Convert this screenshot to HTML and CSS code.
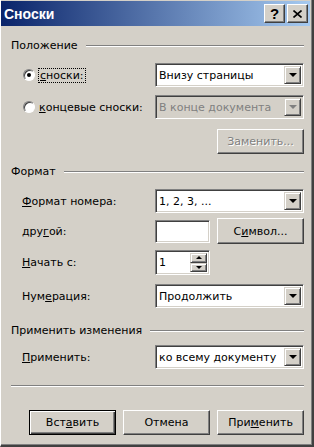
FILE: index.html
```html
<!DOCTYPE html>
<html lang="ru">

<head>
    <meta charset="UTF-8">
    <title>Сноски</title>
    <link rel="stylesheet" href="styles.css">
</head>

<body>

    <div class="window">
        <div class="titlebar">
            <span class="title">Сноски</span>
            <div class="caption-btns">
                <div class="cap-btn help">?</div>
                <div class="cap-btn close">
                    <svg width="9" height="8" viewBox="0 0 9 8">
                        <path d="M0.5 0.5 L8.5 7.5 M8.5 0.5 L0.5 7.5" stroke="#000" stroke-width="1.6" fill="none" />
                    </svg>
                </div>
            </div>
        </div>

        <div class="content">
            <div class="group-head g1"><span>Положение</span><div class="etch"></div></div>

            <div class="row r-radio1">
                <div class="radio-label">
                    <span class="radio checked"></span>
                    <span class="focus"><u>с</u>носки:</span>
                </div>
                <div class="combo">
                    <div class="combo-text">Внизу страницы</div>
                    <div class="drop"><span class="tri"></span></div>
                </div>
            </div>

            <div class="row r-radio2">
                <div class="radio-label">
                    <span class="radio"></span>
                    <span class="lbl"><u>к</u>онцевые сноски:</span>
                </div>
                <div class="combo disabled">
                    <div class="combo-text">В конце документа</div>
                    <div class="drop"><span class="tri"></span></div>
                </div>
            </div>

            <div class="row r-replace">
                <div class="btn disabled-btn">Заменить...</div>
            </div>

            <div class="group-head g2"><span>Формат</span><div class="etch"></div></div>

            <div class="row r-fmt">
                <div class="field-label"><u>Ф</u>ормат номера:</div>
                <div class="combo">
                    <div class="combo-text">1, 2, 3, ...</div>
                    <div class="drop"><span class="tri"></span></div>
                </div>
            </div>

            <div class="row r-other">
                <div class="field-label">дру<u>г</u>ой:</div>
                <div class="pair">
                    <div class="edit small"></div>
                    <div class="btn">С<u>и</u>мвол...</div>
                </div>
            </div>

            <div class="row r-start">
                <div class="field-label"><u>Н</u>ачать с:</div>
                <div class="spin-wrap">
                    <div class="spin">
                        <div class="spin-text">1</div>
                        <div class="spin-btns">
                            <div class="spin-btn"><span class="tri up"></span></div>
                            <div class="spin-btn"><span class="tri"></span></div>
                        </div>
                    </div>
                </div>
            </div>

            <div class="row r-num">
                <div class="field-label">Нум<u>е</u>рация:</div>
                <div class="combo">
                    <div class="combo-text">Продолжить</div>
                    <div class="drop"><span class="tri"></span></div>
                </div>
            </div>

            <div class="group-head g3"><span>Применить изменения</span><div class="etch"></div></div>

            <div class="row r-apply">
                <div class="field-label"><u>П</u>рименить:</div>
                <div class="combo">
                    <div class="combo-text">ко всему документу</div>
                    <div class="drop"><span class="tri"></span></div>
                </div>
            </div>

            <div class="etch sep"></div>

            <div class="buttons">
                <div class="btn default">Вст<u>а</u>вить</div>
                <div class="btn">Отмена</div>
                <div class="btn">При<u>м</u>енить</div>
            </div>
        </div>
    </div>

</body>

</html>
```

FILE: styles.css
```css
html,
body {
    margin: 0;
    height: 100%;
    background: #d4d0c8;
    font-family: "DejaVu Sans", sans-serif;
    font-size: 11px;
    color: #000;
}

u {
    text-decoration: underline;
    text-underline-offset: 1px;
}

.window {
    width: 314px;
    height: 447px;
    box-sizing: border-box;
    background: #d4d0c8;
    border-left: 1px solid #fff;
    border-right: 2px solid #404040;
    border-bottom: 2px solid #404040;
    box-shadow: inset -1px -1px #808080;
    padding-top: 1px;
}

.titlebar {
    height: 25px;
    margin-right: 2px;
    background: linear-gradient(to right, #0a246a, #a6caf0);
    display: flex;
    align-items: center;
    justify-content: space-between;
}

.title {
    font-family: "Liberation Sans", sans-serif;
    font-weight: bold;
    font-size: 14px;
    color: #fff;
    padding-left: 3px;
}

.caption-btns {
    display: flex;
    gap: 2px;
    padding-right: 2px;
}

.cap-btn {
    width: 21px;
    height: 19px;
    box-sizing: border-box;
    background: #d4d0c8;
    border: 1px solid;
    border-color: #fff #404040 #404040 #fff;
    box-shadow: inset -1px -1px #808080;
    display: flex;
    align-items: center;
    justify-content: center;
}

.cap-btn.help {
    font-family: "Liberation Sans", sans-serif;
    font-weight: bold;
    font-size: 15px;
    line-height: 1;
}

.content {
    padding: 13px 8px 0 10px;
}

.group-head {
    display: flex;
    align-items: center;
    height: 13px;
}

.group-head .etch {
    flex: 1;
    margin-left: 8px;
}

.etch {
    height: 0;
    border-top: 1px solid #808080;
    border-bottom: 1px solid #fff;
}

.g2 { margin-top: 11px; }
.g3 { margin-top: 16px; }

.row {
    display: flex;
    align-items: center;
    justify-content: space-between;
}

.r-radio1 { margin-top: 11px; }
.r-radio2 { margin-top: 8px; }
.r-replace { margin-top: 10px; justify-content: flex-end; }
.r-fmt { margin-top: 11px; }
.r-other { margin-top: 5px; }
.r-start { margin-top: 6px; }
.r-num { margin-top: 9px; }
.r-apply { margin-top: 8px; }

.radio-label {
    display: flex;
    align-items: center;
    padding-left: 12px;
}

.radio {
    width: 12px;
    height: 12px;
    box-sizing: border-box;
    border-radius: 50%;
    background: #fff;
    border: 1px solid;
    border-color: #808080 #fff #fff #808080;
    box-shadow: inset 1px 1px #404040;
    margin-right: 4px;
    position: relative;
}

.radio.checked::after {
    content: "";
    position: absolute;
    left: 3px;
    top: 3px;
    width: 4px;
    height: 4px;
    border-radius: 50%;
    background: #000;
}

.focus {
    outline: 1px dotted #000;
    padding: 0 1px;
}

.field-label {
    padding-left: 11px;
}

.combo {
    width: 149px;
    height: 24px;
    flex-shrink: 0;
    box-sizing: border-box;
    background: #fff;
    border: 1px solid;
    border-color: #808080 #fff #fff #808080;
    box-shadow: inset 1px 1px #404040, inset -1px -1px #d4d0c8;
    display: flex;
    align-items: center;
    padding: 2px;
}

.combo-text {
    flex: 1;
    padding-left: 1px;
    white-space: nowrap;
    overflow: hidden;
}

.drop,
.spin-btn {
    width: 17px;
    align-self: stretch;
    box-sizing: border-box;
    background: #d4d0c8;
    border: 1px solid;
    border-color: #d4d0c8 #404040 #404040 #d4d0c8;
    box-shadow: inset 1px 1px #fff, inset -1px -1px #808080;
    display: flex;
    align-items: center;
    justify-content: center;
}

.tri {
    width: 0;
    height: 0;
    border-left: 4px solid transparent;
    border-right: 4px solid transparent;
    border-top: 4px solid #000;
}

.tri.up {
    border-top: none;
    border-bottom: 4px solid #000;
}

.combo.disabled {
    background: #d4d0c8;
    color: #808080;
}

.combo.disabled .tri {
    border-top-color: #808080;
}

.btn {
    width: 87px;
    height: 25px;
    flex-shrink: 0;
    box-sizing: border-box;
    background: #d4d0c8;
    border: 1px solid;
    border-color: #fff #404040 #404040 #fff;
    box-shadow: inset -1px -1px #808080;
    display: flex;
    align-items: center;
    justify-content: center;
}

.disabled-btn {
    color: #808080;
    text-shadow: 1px 1px #fff;
}

.pair {
    display: flex;
    align-items: center;
    justify-content: space-between;
    width: 149px;
    flex-shrink: 0;
}

.pair .btn {
    height: 26px;
}

.edit.small {
    width: 55px;
    height: 23px;
    flex-shrink: 0;
    box-sizing: border-box;
    background: #fff;
    border: 1px solid;
    border-color: #808080 #fff #fff #808080;
    box-shadow: inset 1px 1px #404040, inset -1px -1px #d4d0c8;
}

.spin-wrap {
    width: 149px;
    flex-shrink: 0;
}

.spin {
    width: 55px;
    height: 25px;
    box-sizing: border-box;
    background: #fff;
    border: 1px solid;
    border-color: #808080 #fff #fff #808080;
    box-shadow: inset 1px 1px #404040, inset -1px -1px #d4d0c8;
    padding: 2px;
    display: flex;
}

.spin-text {
    flex: 1;
    display: flex;
    align-items: center;
    padding-left: 1px;
}

.spin-btns {
    width: 17px;
    display: flex;
    flex-direction: column;
}

.spin-btn {
    flex: 1;
    width: 17px;
}

.spin-btn .tri {
    border-left-width: 3px;
    border-right-width: 3px;
    border-top-width: 3px;
}

.spin-btn .tri.up {
    border-bottom-width: 3px;
}

.sep {
    margin-top: 16px;
}

.buttons {
    display: flex;
    justify-content: flex-end;
    gap: 7px;
    margin-top: 23px;
}

.btn.default {
    border: 1px solid #000;
    box-shadow: inset 1px 1px #fff, inset -1px -1px #404040, inset -2px -2px #808080;
}
```
